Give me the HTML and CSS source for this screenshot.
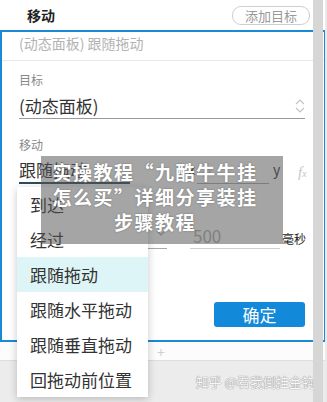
FILE: index.html
```html
<!DOCTYPE html>
<html lang="zh-CN">
<head>
<meta charset="utf-8">
<title>移动</title>
<link rel="stylesheet" href="styles.css">
</head>
<body>
<div class="page">
  <header class="top">
    <span class="top-title">移动</span>
    <span class="add-btn">添加目标</span>
  </header>
  <section class="panel">
    <div class="summary">(动态面板) 跟随拖动</div>
    <div class="form">
      <div class="label">目标</div>
      <div class="field target">
        <span>(动态面板)</span>
        <svg class="updown" width="10" height="16" viewBox="0 0 10 16"><path d="M1 6 L5 2 L9 6 M1 10 L5 14 L9 10" fill="none" stroke="#c4c4c4" stroke-width="1.2"/></svg>
      </div>
      <div class="label label-gap">移动</div>
      <div class="row move">
        <span class="select dark">跟随拖动</span>
        <span class="axis">x</span>
        <span class="num"><i class="fx">f<small>x</small></i></span>
        <span class="axis y">y</span>
        <i class="fx end">f<small>x</small></i>
      </div>
      <div class="row easing">
        <span class="select easing-sel">
          <svg class="chev" width="10" height="6" viewBox="0 0 10 6"><path d="M1 1 L5 5 L9 1" fill="none" stroke="#aaa" stroke-width="1.2"/></svg>
        </span>
        <span class="num time">500</span>
        <span class="unit">毫秒</span>
      </div>
      <div class="actions"><span class="ok">确定</span></div>
    </div>
  </section>
  <div class="addrow"><span class="plus">+</span></div>
  <footer class="foot"><span class="mark">知乎 @看我倒挂金钩</span></footer>
  <div class="scrollbar"></div>
  <ul class="menu">
    <li>到达</li>
    <li>经过</li>
    <li class="active">跟随拖动</li>
    <li>跟随水平拖动</li>
    <li>跟随垂直拖动</li>
    <li>回拖动前位置</li>
  </ul>
  <div class="overlay">实操教程“九酷牛牛挂<br>怎么买”详细分享装挂<br>步骤教程</div>
</div>
</body>
</html>
```
FILE: styles.css
```css
* { box-sizing: border-box; margin: 0; padding: 0; }
html, body { width: 327px; height: 402px; overflow: hidden; }
body {
  background: #e9e9e9;
  font-family: "Noto Sans CJK SC", "Noto Sans", sans-serif;
  color: #333;
}
.page { position: relative; width: 325px; height: 402px; background: #fff; }

.top {
  height: 30px;
  display: flex;
  align-items: center;
  justify-content: space-between;
  padding: 0 15px 0 27px;
}
.top-title { font-size: 14px; font-weight: bold; color: #222; }
.add-btn {
  height: 19px;
  line-height: 17px;
  padding: 0 12px;
  border: 1px solid #cfcfcf;
  border-radius: 9px;
  font-size: 13px;
  color: #999;
  width: 78px;
  text-align: center;
}

.panel {
  border: 2px solid #1a8ad6;
  border-right-width: 1px;
}
.summary {
  padding: 0 0 6px 17px;
  line-height: 22px;
  font-size: 14px;
  color: #b3b3b3;
  border-bottom: 1px solid #e8e8e8;
}
.form { padding: 11px 19px 13px 17px; }
.label { font-size: 12px; line-height: 16px; color: #888; }
.label-gap { margin-top: 18px; }

.field {
  display: flex;
  align-items: center;
  justify-content: space-between;
  padding-top: 5px;
  line-height: 25px;
  font-size: 17px;
  color: #333;
  border-bottom: 1px solid #9a9a9a;
}
.updown { display: block; }

.row { display: flex; align-items: flex-end; }
.move { height: 31px; }
.select {
  display: block;
  flex-shrink: 0;
  font-size: 17px;
  line-height: 25px;
  padding-top: 4px;
}
.dark { width: 111px; border-bottom: 2px solid #2f4c5d; }
.axis { font-size: 14px; line-height: 22px; margin-left: 58px; margin-bottom: 4px; }
.axis.y { margin-left: 4px; }
.num {
  display: block;
  flex-shrink: 0;
  width: 72px;
  margin-left: 2px;
  border-bottom: 1px solid #aaa;
  line-height: 25px;
  padding-left: 6px;
}
.fx {
  font-family: "Liberation Serif", serif;
  font-style: italic;
  font-size: 15px;
  color: #c8c8c8;
}
.fx small { font-size: 11px; }
.fx.end { margin-left: auto; margin-bottom: 3px; margin-right: -2px; }

.easing { margin-top: 34px; }
.easing-sel {
  width: 148px;
  height: 31px;
  border-bottom: 1px solid #a8a8a8;
  display: flex;
  justify-content: flex-end;
  align-items: center;
  padding: 5px 1px 0 0;
}
.chev { display: block; margin-top: -6px; }
.time {
  width: 90px;
  margin-left: 23px;
  padding: 5px 0 0 3px;
  font-size: 17px;
  color: #b0b0b0;
  border-bottom: 1px solid #cfcfcf;
}
.unit {
  flex-shrink: 0;
  white-space: nowrap;
  font-size: 12px;
  line-height: 18px;
  margin: 0 -3px 1px 2px;
  color: #222;
}

.actions { display: flex; justify-content: flex-end; margin-top: 53px; }
.ok {
  width: 91px;
  height: 25px;
  line-height: 25px;
  text-align: center;
  background: #1389d9;
  border-radius: 3px;
  color: #fff;
  font-size: 17px;
}

.addrow { height: 18px; line-height: 18px; background: #fcfcfc; }
.plus { margin-left: 157px; font-size: 14px; color: #cfcfcf; }
.foot {
  height: 42px;
  background: #ececec;
  border-top: 1px solid #dedede;
  display: flex;
  align-items: center;
  justify-content: flex-end;
  padding-right: 10px;
}
.mark {
  font-size: 13px;
  color: rgba(255,255,255,0.95);
  text-shadow: 0 0 1px #8a8a8a, 0 0 1px #8a8a8a;
}

.scrollbar {
  position: absolute;
  top: 0;
  left: 313px;
  width: 10px;
  height: 402px;
  background: #d6d6d6;
}

.menu {
  position: absolute;
  left: 17px;
  top: 187px;
  width: 131px;
  list-style: none;
  background: #fff;
  box-shadow: 0 2px 8px rgba(0,0,0,0.22);
}
.menu li {
  height: 35px;
  line-height: 35px;
  padding-left: 13px;
  font-size: 17px;
  color: #333;
}
.menu li.active { background: #def5f7; }

.overlay {
  position: absolute;
  left: 41px;
  top: 156px;
  width: 242px;
  height: 88px;
  padding: 3px 14px 0 0;
  background: rgba(85,85,85,0.53);
  color: #fff;
  font-weight: bold;
  font-size: 19px;
  letter-spacing: 1.5px;
  line-height: 25px;
  text-align: center;
  text-shadow: 0 0 2px rgba(0,0,0,0.35);
}
```
